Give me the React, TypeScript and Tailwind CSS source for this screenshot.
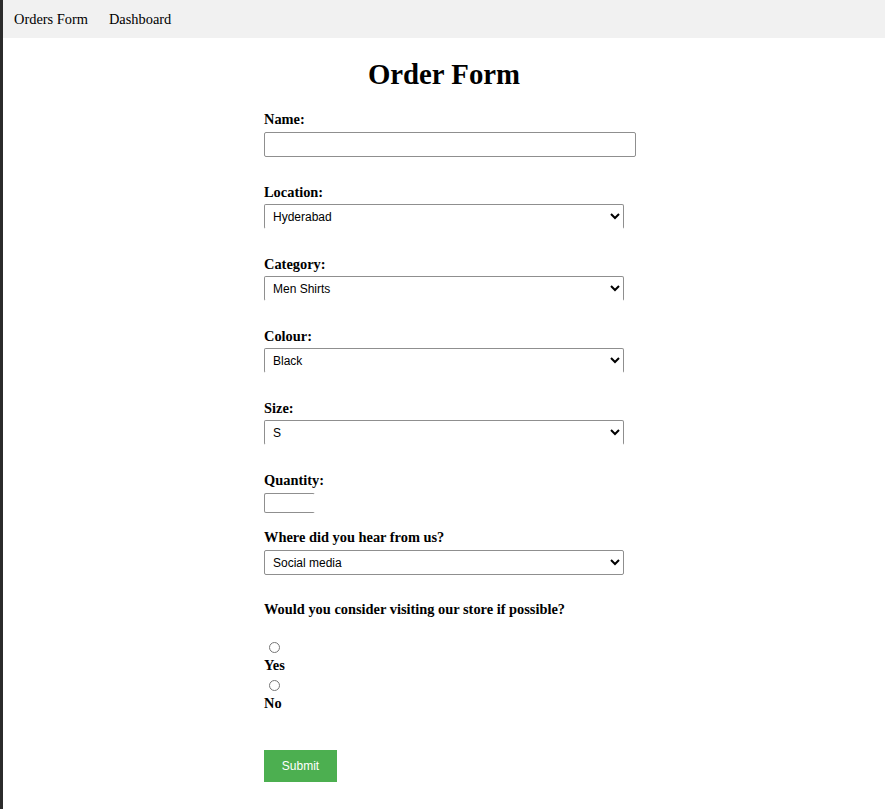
import { useState } from 'react';

const serif = { fontFamily: '"Liberation Serif", "Times New Roman", serif' };

type Field = {
  label: string;
  options: string[];
  open?: boolean;
};

const selects: Field[] = [
  { label: 'Location:', options: ['Hyderabad', 'Bangalore', 'Chennai', 'Mumbai'], open: true },
  { label: 'Category:', options: ['Men Shirts', 'Women Tops', 'Kids Wear'], open: true },
  { label: 'Colour:', options: ['Black', 'White', 'Blue', 'Red'], open: true },
  { label: 'Size:', options: ['S', 'M', 'L', 'XL'], open: true },
];

function Select({ options, open }: { options: string[]; open?: boolean }) {
  return (
    <select
      className={
        'block h-[25px] w-[360px] rounded-[2px] border border-[#8f8f8f] bg-white pl-[4px] pr-[4px] pt-[1px] text-[12px] text-black ' +
        (open ? 'border-b-transparent' : '')
      }
      style={{ fontFamily: '"Liberation Sans", Arial, sans-serif' }}
    >
      {options.map((o) => (
        <option key={o}>{o}</option>
      ))}
    </select>
  );
}

export default function App() {
  const [visit, setVisit] = useState('');

  return (
    <div className="flex min-h-[809px] w-full bg-white text-black" style={serif}>
      <div className="w-[3px] shrink-0 bg-[#2b2b2b]" />
      <div className="min-w-0 flex-1">
        <nav className="flex h-[38px] items-center gap-[21px] bg-[#f1f1f1] px-[11px] pt-[2px] text-[14.4px]">
          <a href="#">Orders Form</a>
          <a href="#">Dashboard</a>
        </nav>

        <h1 className="mt-[20px] text-center text-[28.8px] font-bold leading-[33px]">Order Form</h1>

        <form className="mx-auto mt-[20px] w-[360px] pb-[27px]" onSubmit={(e) => e.preventDefault()}>
          <label className="block text-[14.4px] font-bold leading-[17px]">Name:</label>
          <input
            type="text"
            className="mt-[4px] block h-[25px] w-[372px] rounded-[2px] border border-[#8f8f8f] bg-white px-2 text-[12px]"
          />

          {selects.map((f) => (
            <div key={f.label} className="mt-[27px]">
              <label className="block text-[14.4px] font-bold leading-[17px]">{f.label}</label>
              <div className="mt-[3px]">
                <Select options={f.options} open={f.open} />
              </div>
            </div>
          ))}

          <div className="mt-[27px]">
            <label className="block text-[14.4px] font-bold leading-[17px]">Quantity:</label>
            <input
              type="number"
              className="mt-[4px] block h-[20px] w-[51px] rounded-[2px] border border-[#8f8f8f] border-r-transparent bg-white text-[12px]"
            />
          </div>

          <div className="mt-[16px]">
            <label className="block text-[14.4px] font-bold leading-[17px]">Where did you hear from us?</label>
            <div className="mt-[4px]">
              <Select options={['Social media', 'Friends', 'Advertisement', 'Other']} />
            </div>
          </div>

          <p className="mt-[26px] text-[14.4px] font-bold leading-[17px]">
            Would you consider visiting our store if possible?
          </p>

          <div className="mt-[24px]">
            {['Yes', 'No'].map((v, i) => (
              <div key={v} className={i ? 'mt-[6px]' : ''}>
                <input
                  type="radio"
                  name="visit"
                  checked={visit === v}
                  onChange={() => setVisit(v)}
                  className="ml-[5px] block h-[11px] w-[11px] accent-[#767676]"
                />
                <label className="mt-[4px] block text-[14.4px] font-bold leading-[17px]">{v}</label>
              </div>
            ))}
          </div>

          <button
            type="submit"
            className="mt-[38px] block h-[32px] w-[73px] bg-[#4caf50] text-[12px] text-white"
            style={{ fontFamily: '"Liberation Sans", Arial, sans-serif' }}
          >
            Submit
          </button>
        </form>
      </div>
    </div>
  );
}
